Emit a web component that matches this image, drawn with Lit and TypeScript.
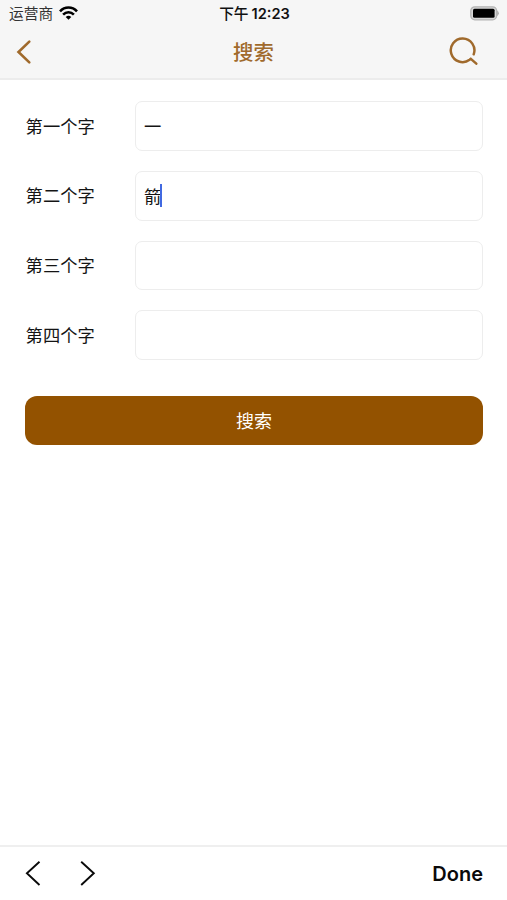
import { LitElement, html, css, svg } from "lit";
import { customElement, state } from "lit/decorators.js";

interface Field {
  label: string;
  value: string;
}

@customElement("app-root")
export class AppRoot extends LitElement {
  static styles = css`
    :host {
      display: flex;
      flex-direction: column;
      box-sizing: border-box;
      height: 900px;
      background: #fff;
      color: #141414;
      font-family: Inter, "Noto Sans CJK SC", sans-serif;
    }
    svg {
      display: block;
      flex: none;
    }
    .top {
      box-sizing: border-box;
      height: 80px;
      background: #f6f6f6;
      border-bottom: 2px solid #ececec;
    }
    .status,
    .nav {
      display: grid;
      grid-template-columns: 1fr auto 1fr;
      align-items: center;
    }
    .status {
      height: 26px;
      padding: 0 7px 0 9px;
      font-size: 14.7px;
      line-height: 24px;
    }
    .carrier {
      display: flex;
      align-items: center;
      gap: 6px;
    }
    .carrier-name {
      padding-top: 2px;
      color: #333;
    }
    .time {
      display: flex;
      gap: 3px;
      padding-top: 2px;
      font-weight: 500;
      color: #111;
    }
    .clock {
      font-weight: 600;
      font-size: 14.6px;
    }
    .end {
      justify-self: end;
    }
    .nav {
      height: 52px;
      padding: 0 28px 0 16px;
      color: #a06a2c;
    }
    .nav-left {
      justify-self: start;
    }
    .title {
      margin-left: 12px;
      padding-top: 2px;
      font-size: 20.4px;
      font-weight: 500;
      line-height: 50px;
    }
    .form {
      flex: 1;
      display: flex;
      flex-direction: column;
      gap: 20px;
      padding: 21.3px 24px 0 25px;
    }
    .row {
      display: flex;
      align-items: center;
      height: 49.7px;
    }
    .label {
      box-sizing: border-box;
      width: 110px;
      padding-left: 0.6px;
      font-size: 17.3px;
      line-height: 49px;
    }
    .input {
      box-sizing: border-box;
      flex: 1;
      display: flex;
      align-items: center;
      height: 100%;
      padding: 0 8px;
      border: 1.5px solid #ededed;
      border-radius: 7px;
      font-size: 17.3px;
      line-height: 46px;
    }
    .value {
      padding-top: 2px;
    }
    .caret {
      width: 2px;
      height: 23px;
      margin-left: -1px;
      background: #4169e1;
    }
    .submit {
      box-sizing: border-box;
      height: 49px;
      margin-top: 16px;
      padding-top: 1px;
      border-radius: 12px;
      background: #935200;
      color: #fff;
      font-size: 18px;
      line-height: 49px;
      text-align: center;
    }
    .toolbar {
      box-sizing: border-box;
      display: flex;
      align-items: center;
      gap: 38px;
      height: 55px;
      padding: 0 24px 0 24px;
      border-top: 2px solid #efefef;
    }
    .done {
      margin-left: auto;
      color: #0a0a0a;
      font-size: 20px;
      font-weight: 600;
    }
  `;

  @state() private fields: Field[] = [
    { label: "第一个字", value: "一" },
    { label: "第二个字", value: "箭" },
    { label: "第三个字", value: "" },
    { label: "第四个字", value: "" },
  ];

  @state() private focused = 1;

  private chevron(path: string) {
    return html`<svg width="18" height="28" viewBox="0 0 18 28" fill="none" stroke="#0a0a0a" stroke-width="1.9">
      ${svg`<path d=${path} />`}
    </svg>`;
  }

  render() {
    return html`
      <div class="top">
        <div class="status">
          <div class="carrier">
            <span class="carrier-name">运营商</span>
            <svg width="19" height="14" viewBox="0 0 19 14" fill="none" stroke="#000" stroke-width="2.6">
              <path d="M1 5.3C5.8.3 13.2.3 18 5.3" />
              <path d="M4.1 8.6C7.2 5.5 11.8 5.5 14.9 8.6" />
              <path d="M6.7 11Q9.5 8.6 12.3 11L9.5 13.8Z" fill="#000" stroke="none" />
            </svg>
          </div>
          <div class="time"><span>下午</span><span class="clock">12:23</span></div>
          <svg class="end" width="30" height="15" viewBox="0 0 30 15">
            <rect x=".8" y=".8" width="25.8" height="13" rx="4" fill="#d8d8d8" stroke="#b4b4b4" stroke-width="1.3" />
            <rect x="3" y="2.8" width="21.6" height="9" rx="1.5" fill="#000" />
            <path d="M27.2 4.3Q30.4 7.3 27.2 10.3Z" fill="#ababab" />
          </svg>
        </div>
        <div class="nav">
          <svg class="nav-left" width="16" height="26" viewBox="0 0 16 26" fill="none" stroke="#a06a2c" stroke-width="2.6" stroke-linecap="round">
            <path d="M13.3 2.6 2.5 13 13.3 23.4" />
          </svg>
          <span class="title">搜索</span>
          <svg class="end" width="30" height="30" viewBox="0 0 30 30" fill="none" stroke="#a06a2c" stroke-width="2.5" stroke-linecap="round">
            <path d="M24.7 17.3A11.8 11.8 0 1 0 20.6 22.8L21.8 21.8L27.3 26.6" />
          </svg>
        </div>
      </div>
      <div class="form">
        ${this.fields.map(
          (field, index) => html`
            <div class="row">
              <span class="label">${field.label}</span>
              <div class="input">
                <span class="value">${field.value}</span>
                ${index === this.focused ? html`<span class="caret"></span>` : ""}
              </div>
            </div>
          `
        )}
        <div class="submit">搜索</div>
      </div>
      <div class="toolbar">
        ${this.chevron("M15.5 1.7 2.9 13.3 15.5 25")}
        ${this.chevron("M1.2 1.7 13.8 13.3 1.2 25")}
        <span class="done">Done</span>
      </div>
    `;
  }
}
